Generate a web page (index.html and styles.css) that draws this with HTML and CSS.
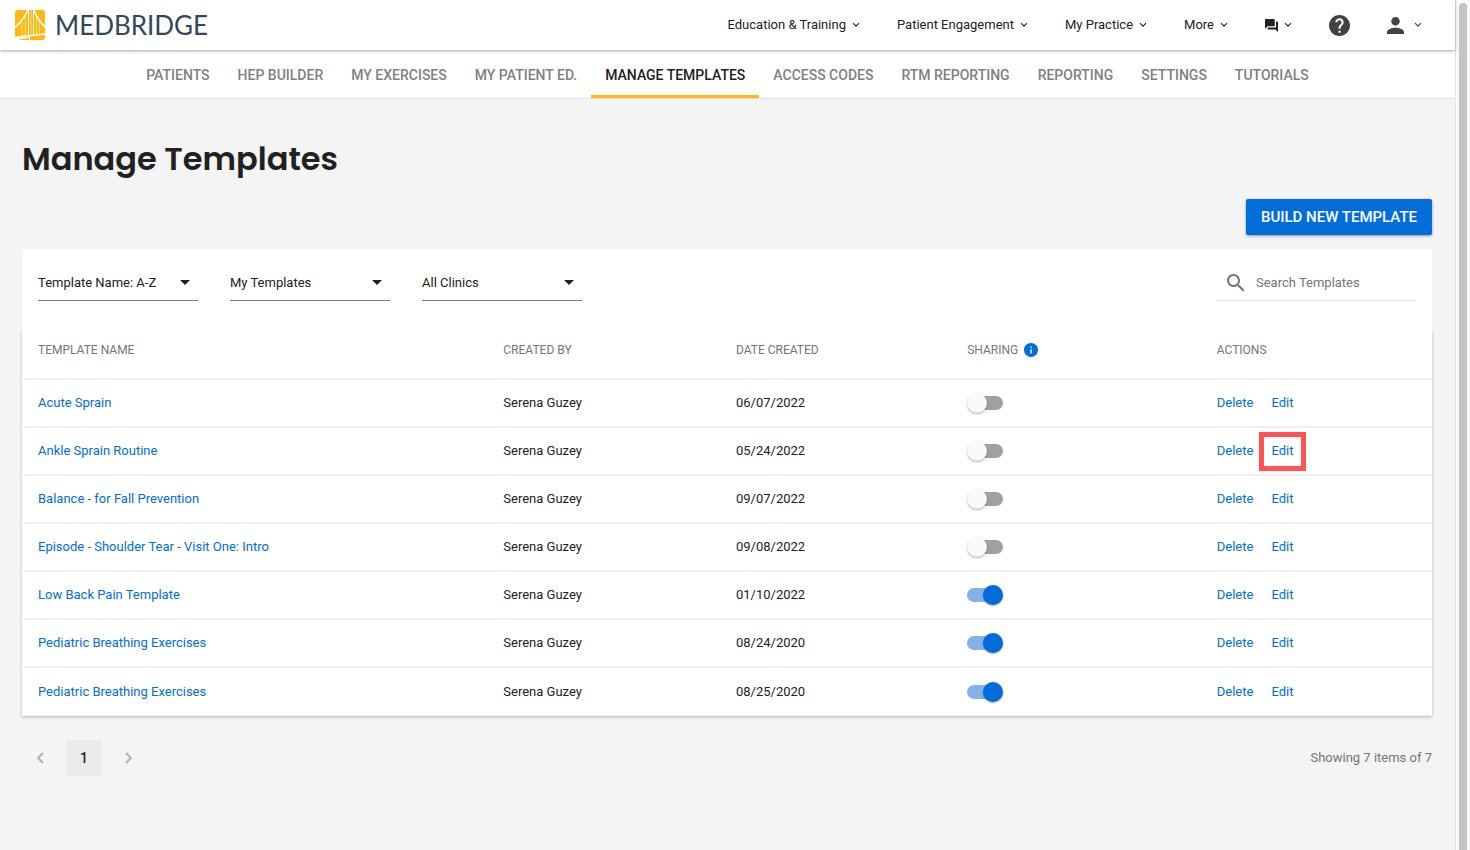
FILE: index.html
```html
<!DOCTYPE html>
<html lang="en">
<head>
  <meta charset="UTF-8" />
  <meta name="viewport" content="width=device-width, initial-scale=1" />
  <title>Manage Templates | MedBridge</title>
  <link rel="stylesheet" href="styles.css">
</head>
<body>
  <!-- shared icons -->
  <svg class="sprite" aria-hidden="true">
    <symbol id="chevron" viewBox="0 0 8 6"><path d="M1 1.2l3 3 3-3" fill="none" stroke="currentColor" stroke-width="1.2"/></symbol>
    <symbol id="caret" viewBox="0 0 10 5"><path d="M0 0h10L5 5z" fill="currentColor"/></symbol>
  </svg>

  <div class="screen">
    <header class="topbar">
      <a class="logo" href="#">
        <svg class="logo-mark" viewBox="0 0 30 30" aria-hidden="true">
          <path fill="#fdb913" d="M3 0h24a3 3 0 0 1 3 3v24a3 3 0 0 1-3 3H3a3 3 0 0 1-3-3V3a3 3 0 0 1 3-3z"/>
          <g fill="none" stroke="#fff">
            <path stroke-width="1.6" d="M0 17.500C5 13 10 7 13 0M30 17C25 12 21 7 19 0"/>
            <path stroke-width=".9" d="M13.500 0v27M18.500 0v26"/>
            <path stroke-width=".5" d="M16 0v27M7 12v15M10.500 7v20M21.500 7v19M24.500 11v14"/>
            <path stroke-width="1.400" d="M0 27.500C10 25.500 20 25.500 30 24"/>
          </g>
          <path fill="#fff" d="M0 27.500L15 26.500V30H0z"/>
          <path fill="#fdb913" d="M4 29.500L14 28v2H4zM16 27.500h2V30h-2z"/>
        </svg>
        <span>MEDBRIDGE</span>
      </a>
      <nav class="main-menu" aria-label="Main">
        <button type="button">Education &amp; Training <svg class="chevron"><use href="#chevron"/></svg></button>
        <button type="button">Patient Engagement <svg class="chevron"><use href="#chevron"/></svg></button>
        <button type="button">My Practice <svg class="chevron"><use href="#chevron"/></svg></button>
        <button type="button">More <svg class="chevron"><use href="#chevron"/></svg></button>
        <button type="button" aria-label="Messages">
          <svg class="icon-chat" viewBox="2 2 20 20"><path fill="currentColor" d="M21 6h-2v9H6v2c0 .55.45 1 1 1h11l4 4V7c0-.55-.45-1-1-1zm-4 6V3c0-.55-.45-1-1-1H3c-.55 0-1 .45-1 1v14l4-4h10c.55 0 1-.45 1-1z"/></svg>
          <svg class="chevron"><use href="#chevron"/></svg>
        </button>
        <button type="button" class="icon-button" aria-label="Help">
          <svg class="icon-help" viewBox="2 2 20 20"><path fill="currentColor" d="M12 2C6.480 2 2 6.480 2 12s4.480 10 10 10 10-4.480 10-10S17.520 2 12 2zm1 17h-2v-2h2v2zm2.070-7.750l-.9.920C13.450 12.900 13 13.500 13 15h-2v-.5c0-1.100.45-2.100 1.170-2.830l1.240-1.260c.37-.36.59-.86.59-1.410 0-1.100-.9-2-2-2s-2 .9-2 2H8c0-2.210 1.790-4 4-4s4 1.790 4 4c0 .88-.36 1.680-.93 2.250z"/></svg>
        </button>
        <button type="button" class="icon-button" aria-label="Account">
          <svg class="icon-user" viewBox="4 4 16 16"><path fill="currentColor" d="M12 12c2.210 0 4-1.790 4-4s-1.790-4-4-4-4 1.790-4 4 1.790 4 4 4zm0 2c-2.670 0-8 1.340-8 4v2h16v-2c0-2.660-5.330-4-8-4z"/></svg>
          <svg class="chevron"><use href="#chevron"/></svg>
        </button>
      </nav>
    </header>

    <nav class="tabs" aria-label="Sections">
      <a href="#">PATIENTS</a>
      <a href="#">HEP BUILDER</a>
      <a href="#">MY EXERCISES</a>
      <a href="#">MY PATIENT ED.</a>
      <a href="#" class="active" aria-current="page">MANAGE TEMPLATES</a>
      <a href="#">ACCESS CODES</a>
      <a href="#">RTM REPORTING</a>
      <a href="#">REPORTING</a>
      <a href="#">SETTINGS</a>
      <a href="#">TUTORIALS</a>
    </nav>

    <main>
      <h1>Manage Templates</h1>
      <div class="page-actions">
        <button type="button" class="btn-primary">BUILD NEW TEMPLATE</button>
      </div>

      <section class="filters">
        <div class="select">
          <select aria-label="Sort by">
            <option>Template Name: A-Z</option>
            <option>Template Name: Z-A</option>
          </select>
          <svg class="caret"><use href="#caret"/></svg>
        </div>
        <div class="select">
          <select aria-label="Owner">
            <option>My Templates</option>
            <option>All Templates</option>
          </select>
          <svg class="caret"><use href="#caret"/></svg>
        </div>
        <div class="select">
          <select aria-label="Clinic">
            <option>All Clinics</option>
          </select>
          <svg class="caret"><use href="#caret"/></svg>
        </div>
        <div class="search">
          <svg class="icon-search" viewBox="3 3 18 18"><path fill="currentColor" d="M15.500 14h-.79l-.28-.27C15.410 12.590 16 11.110 16 9.500 16 5.910 13.090 3 9.500 3S3 5.910 3 9.500 5.910 16 9.500 16c1.610 0 3.090-.59 4.230-1.570l.27.28v.79l5 4.990L20.490 19l-4.990-5zm-6 0C7.010 14 5 11.990 5 9.500S7.010 5 9.500 5 14 7.010 14 9.500 11.990 14 9.500 14z"/></svg>
          <input type="text" placeholder="Search Templates" aria-label="Search Templates">
        </div>
      </section>

      <table class="templates">
        <thead>
          <tr>
            <th class="col-name">TEMPLATE NAME</th>
            <th class="col-by">CREATED BY</th>
            <th class="col-date">DATE CREATED</th>
            <th class="col-sharing">
              <span class="with-icon">SHARING
                <svg class="icon-info" viewBox="2 2 20 20"><path fill="currentColor" d="M12 2C6.480 2 2 6.480 2 12s4.480 10 10 10 10-4.480 10-10S17.520 2 12 2zm1 15h-2v-6h2v6zm0-8h-2V7h2v2z"/></svg>
              </span>
            </th>
            <th class="col-actions">ACTIONS</th>
          </tr>
        </thead>
        <tbody>
          <tr>
            <td><a href="#">Acute Sprain</a></td>
            <td>Serena Guzey</td>
            <td>06/07/2022</td>
            <td><input type="checkbox" class="switch" aria-label="Share Acute Sprain"></td>
            <td><div class="actions"><a href="#">Delete</a><a href="#">Edit</a></div></td>
          </tr>
          <tr>
            <td><a href="#">Ankle Sprain Routine</a></td>
            <td>Serena Guzey</td>
            <td>05/24/2022</td>
            <td><input type="checkbox" class="switch" aria-label="Share Ankle Sprain Routine"></td>
            <td><div class="actions"><a href="#">Delete</a><a href="#" class="highlight">Edit</a></div></td>
          </tr>
          <tr>
            <td><a href="#">Balance - for Fall Prevention</a></td>
            <td>Serena Guzey</td>
            <td>09/07/2022</td>
            <td><input type="checkbox" class="switch" aria-label="Share Balance - for Fall Prevention"></td>
            <td><div class="actions"><a href="#">Delete</a><a href="#">Edit</a></div></td>
          </tr>
          <tr>
            <td><a href="#">Episode - Shoulder Tear - Visit One: Intro</a></td>
            <td>Serena Guzey</td>
            <td>09/08/2022</td>
            <td><input type="checkbox" class="switch" aria-label="Share Episode - Shoulder Tear"></td>
            <td><div class="actions"><a href="#">Delete</a><a href="#">Edit</a></div></td>
          </tr>
          <tr>
            <td><a href="#">Low Back Pain Template</a></td>
            <td>Serena Guzey</td>
            <td>01/10/2022</td>
            <td><input type="checkbox" class="switch" aria-label="Share Low Back Pain Template" checked></td>
            <td><div class="actions"><a href="#">Delete</a><a href="#">Edit</a></div></td>
          </tr>
          <tr>
            <td><a href="#">Pediatric Breathing Exercises</a></td>
            <td>Serena Guzey</td>
            <td>08/24/2020</td>
            <td><input type="checkbox" class="switch" aria-label="Share Pediatric Breathing Exercises" checked></td>
            <td><div class="actions"><a href="#">Delete</a><a href="#">Edit</a></div></td>
          </tr>
          <tr>
            <td><a href="#">Pediatric Breathing Exercises</a></td>
            <td>Serena Guzey</td>
            <td>08/25/2020</td>
            <td><input type="checkbox" class="switch" aria-label="Share Pediatric Breathing Exercises" checked></td>
            <td><div class="actions"><a href="#">Delete</a><a href="#">Edit</a></div></td>
          </tr>
        </tbody>
      </table>

      <footer class="pagination">
        <div class="pages">
          <button type="button" aria-label="Previous page"><svg class="arrow" viewBox="0 0 8 12"><path d="M7 1L2 6l5 5" fill="none" stroke="currentColor" stroke-width="1.900"/></svg></button>
          <button type="button" class="current">1</button>
          <button type="button" aria-label="Next page"><svg class="arrow" viewBox="0 0 8 12"><path d="M2 1l5 5-5 5" fill="none" stroke="currentColor" stroke-width="1.900"/></svg></button>
        </div>
        <span>Showing 7 items of 7</span>
      </footer>
    </main>
  </div>
  <div class="scrollbar"><div class="thumb"></div></div>
</body>
</html>
```
FILE: styles.css
```css
* {
  margin: 0;
  padding: 0;
  box-sizing: border-box;
}
body {
  display: flex;
  min-height: 100vh;
  background: #f4f4f4;
  font-family: Roboto, sans-serif;
  font-size: 13px;
  line-height: 20px;
  color: #212121;
}
button, input, select {
  font: inherit;
  color: inherit;
  background: none;
  border: none;
}
button {
  cursor: pointer;
}
a {
  color: #006ddb;
  text-decoration: none;
}
svg {
  display: block;
  flex: none;
}
.sprite {
  display: none;
}
.screen {
  flex: 1;
  min-width: 0;
}

/* top bar */
.topbar {
  position: relative;
  display: flex;
  align-items: center;
  justify-content: space-between;
  height: 50px;
  padding: 0 33px 0 15px;
  background: #fff;
  box-shadow: 0 1px 3px rgba(0, 0, 0, 0.35);
}
.logo {
  display: flex;
  align-items: center;
  gap: 10px;
  font-family: Lato, sans-serif;
  font-size: 26px;
  color: #33475b;
}
.logo-mark {
  width: 30px;
  height: 30px;
}
.main-menu {
  display: flex;
  align-items: center;
  gap: 37px;
}
.main-menu button {
  display: flex;
  align-items: center;
  gap: 6px;
}
.main-menu .icon-button {
  gap: 10px;
  color: #424242;
}
.chevron {
  width: 8px;
  height: 6px;
}
.icon-chat {
  width: 13px;
  height: 13px;
}
.icon-help {
  width: 21px;
  height: 21px;
}
.icon-user {
  width: 17px;
  height: 17px;
}

/* section tabs */
.tabs {
  display: flex;
  justify-content: center;
  height: 49px;
  background: #fff;
  border-bottom: 1px solid #e0e0e0;
}
.tabs a {
  display: flex;
  flex-direction: column;
  justify-content: space-between;
  padding: 15px 0 0;
  font-size: 14px;
  font-weight: 500;
  color: #808080;
  text-indent: 14px;
  padding-right: 14px;
}
.tabs .active {
  color: #212121;
  background: linear-gradient(#fdb913, #fdb913) bottom / 100% 3px no-repeat;
  border-radius: 0;
}

main {
  padding: 36px 23px 36px 22px;
}
h1 {
  font-family: Poppins, Inter, sans-serif;
  font-size: 32px;
  font-weight: 600;
  line-height: 48px;
}
.page-actions {
  display: flex;
  justify-content: flex-end;
  padding: 16px 0 14px;
}
.btn-primary {
  height: 36px;
  padding: 0 15px;
  border-radius: 2px;
  background: #006ddb;
  box-shadow: 0 1px 3px rgba(0, 0, 0, 0.4);
  font-size: 15px;
  font-weight: 500;
  color: #fff;
}

/* filters */
.filters {
  display: flex;
  align-items: flex-start;
  gap: 32px;
  padding: 16px 16px 29px;
  background: #fff;
}
.select {
  display: flex;
  align-items: center;
  width: 160px;
  height: 36px;
  padding-right: 8px;
  border-bottom: 1px solid #757575;
}
.select select {
  flex: 1;
  min-width: 0;
  appearance: none;
}
.caret {
  width: 10px;
  height: 5px;
}
.search {
  display: flex;
  align-items: center;
  gap: 11px;
  width: 200px;
  height: 36px;
  margin-left: auto;
  padding-left: 11px;
  border-bottom: 1px solid #e0e0e0;
}
.search input {
  flex: 1;
  min-width: 0;
  outline: none;
}
.search input::placeholder {
  color: #757575;
}
.icon-search {
  width: 18px;
  height: 18px;
  color: #757575;
}

/* templates table */
.templates {
  width: 100%;
  table-layout: fixed;
  border-collapse: separate;
  border-spacing: 0;
  background: #fff;
  box-shadow: 0 1px 3px rgba(0, 0, 0, 0.25);
  clip-path: inset(0 -4px -4px);
}
.col-name { width: 33%; }
.col-by { width: 16.5%; }
.col-date { width: 16.4%; }
.col-sharing { width: 17.7%; }
.templates th,
.templates td {
  height: 48px;
  padding: 0 16px;
  border-bottom: 2px solid #f0f0f0;
  text-align: left;
}
.templates th {
  height: 50px;
  padding-bottom: 8px;
  font-size: 12px;
  font-weight: 400;
  color: #757575;
}
.templates tbody tr:last-child td {
  height: 48px;
  border-bottom-width: 1px;
}
.with-icon {
  display: flex;
  align-items: center;
  gap: 6px;
}
.icon-info {
  width: 14px;
  height: 14px;
  color: #006ddb;
}
.actions {
  display: flex;
  gap: 18px;
}
.highlight {
  position: relative;
}
.highlight::after {
  content: "";
  position: absolute;
  inset: -9px -13px -10px -12px;
  border: 5px solid #ff5252;
}

/* sharing switch */
.switch {
  appearance: none;
  display: grid;
  align-items: center;
  width: 36px;
  height: 20px;
  cursor: pointer;
}
.switch::before,
.switch::after {
  content: "";
  grid-area: 1 / 1;
}
.switch::before {
  justify-self: end;
  width: 34px;
  height: 14px;
  border-radius: 7px;
  background: #a0a0a0;
}
.switch::after {
  width: 20px;
  height: 20px;
  border-radius: 50%;
  background: #fafafa;
  box-shadow: 0 1px 2px rgba(0, 0, 0, 0.35);
}
.switch:checked::before {
  justify-self: start;
  background: #86b2ec;
}
.switch:checked::after {
  justify-self: end;
  background: #006ddb;
}

/* pagination */
.pagination {
  display: flex;
  align-items: center;
  justify-content: space-between;
  padding-top: 24px;
  color: #757575;
}
.pages {
  display: flex;
  gap: 8px;
}
.pages button {
  display: flex;
  align-items: center;
  justify-content: center;
  width: 36px;
  height: 36px;
  color: #b0b0b0;
}
.pages .current {
  border-radius: 4px;
  background: #eaeaea;
  font-size: 14px;
  font-weight: 500;
  color: #212121;
}
.arrow {
  width: 8px;
  height: 12px;
}

/* scrollbar gutter */
.scrollbar {
  display: flex;
  width: 15px;
  padding: 3px 3px 0;
  background: #fafafa;
  border-left: 1px solid #e6e6e6;
}
.thumb {
  flex: 1;
  border-radius: 4px 4px 0 0;
  background: #c4c4c4;
}
```
